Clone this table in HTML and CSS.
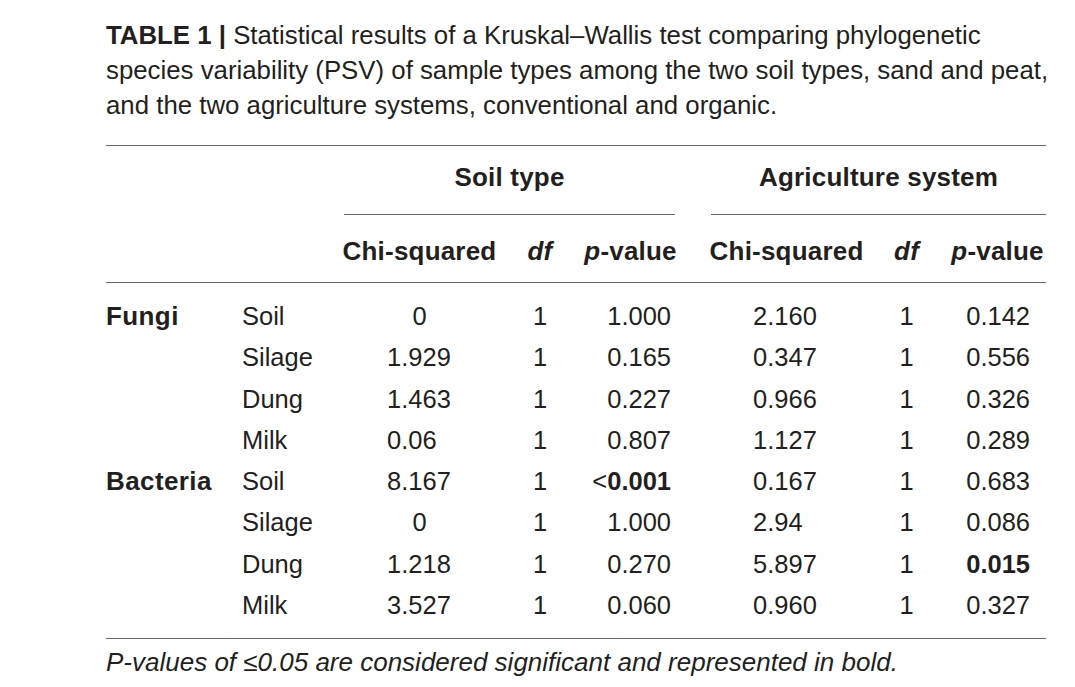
FILE: index.html
```html
<!DOCTYPE html>
<html lang="en">
<head>
<meta charset="utf-8">
<title>Table 1</title>
<link rel="stylesheet" href="styles.css">
</head>
<body>
<div class="page">
  <p class="caption"><b>TABLE 1 |</b> Statistical results of a Kruskal–Wallis test comparing phylogenetic<br>species variability (PSV) of sample types among the two soil types, sand and peat,<br>and the two agriculture systems, conventional and organic.</p>
  <table class="results">
    <colgroup>
      <col class="w-group"><col class="w-type"><col class="w-chi"><col class="w-df"><col class="w-p"><col class="w-gap"><col class="w-chi"><col class="w-df2"><col class="w-p2">
    </colgroup>
    <thead>
      <tr class="head1">
        <th></th><th></th>
        <th colspan="3" class="span"><div class="span-in soil">Soil type</div></th>
        <th></th>
        <th colspan="3" class="span"><div class="span-in agri">Agriculture system</div></th>
      </tr>
      <tr class="head2">
        <th></th><th></th>
        <th>Chi-squared</th><th><i>df</i></th><th><i>p</i>-value</th>
        <th></th>
        <th>Chi-squared</th><th><i>df</i></th><th><i>p</i>-value</th>
      </tr>
    </thead>
    <tbody>
      <tr class="first">
        <td class="grp">Fungi</td><td>Soil</td><td class="chi c">0</td><td class="df">1</td><td class="p">1.000</td><td></td><td class="chi2">2.160</td><td class="df">1</td><td class="p2">0.142</td>
      </tr>
      <tr>
        <td></td><td>Silage</td><td class="chi">1.929</td><td class="df">1</td><td class="p">0.165</td><td></td><td class="chi2">0.347</td><td class="df">1</td><td class="p2">0.556</td>
      </tr>
      <tr>
        <td></td><td>Dung</td><td class="chi">1.463</td><td class="df">1</td><td class="p">0.227</td><td></td><td class="chi2">0.966</td><td class="df">1</td><td class="p2">0.326</td>
      </tr>
      <tr>
        <td></td><td>Milk</td><td class="chi">0.06</td><td class="df">1</td><td class="p">0.807</td><td></td><td class="chi2">1.127</td><td class="df">1</td><td class="p2">0.289</td>
      </tr>
      <tr>
        <td class="grp">Bacteria</td><td>Soil</td><td class="chi">8.167</td><td class="df">1</td><td class="p">&lt;<b>0.001</b></td><td></td><td class="chi2">0.167</td><td class="df">1</td><td class="p2">0.683</td>
      </tr>
      <tr>
        <td></td><td>Silage</td><td class="chi c">0</td><td class="df">1</td><td class="p">1.000</td><td></td><td class="chi2">2.94</td><td class="df">1</td><td class="p2">0.086</td>
      </tr>
      <tr>
        <td></td><td>Dung</td><td class="chi">1.218</td><td class="df">1</td><td class="p">0.270</td><td></td><td class="chi2">5.897</td><td class="df">1</td><td class="p2"><b>0.015</b></td>
      </tr>
      <tr class="last">
        <td></td><td>Milk</td><td class="chi">3.527</td><td class="df">1</td><td class="p">0.060</td><td></td><td class="chi2">0.960</td><td class="df">1</td><td class="p2">0.327</td>
      </tr>
    </tbody>
  </table>
  <p class="note"><i>P-values of ≤0.05 are considered significant and represented in bold.</i></p>
</div>
</body>
</html>
```
FILE: styles.css
```css
html, body {
  margin: 0;
  padding: 0;
  background: #ffffff;
}

body {
  font-family: "Liberation Sans", Arial, sans-serif;
  color: #231f20;
}

.page {
  width: 940px;
  padding: 18px 0 0 106px;
}

.caption {
  margin: 0;
  font-size: 25.8px;
  line-height: 35px;
  white-space: nowrap;
}

.caption b {
  font-weight: bold;
}

.results {
  margin-top: 22px;
  width: 940px;
  table-layout: fixed;
  border-collapse: separate;
  border-spacing: 0;
  border-top: 1px solid #6a6a6a;
  border-bottom: 1px solid #6a6a6a;
}

.w-group { width: 136px; }
.w-type { width: 100px; }
.w-chi { width: 155px; }
.w-df { width: 86px; }
.w-p { width: 95px; }
.w-gap { width: 31px; }
.w-df2 { width: 85px; }
.w-p2 { width: 97px; }

.results th {
  padding: 0;
  font-size: 26px;
  font-weight: bold;
  letter-spacing: 0.2px;
  line-height: 32px;
  text-align: center;
  white-space: nowrap;
}

.head1 th {
  vertical-align: top;
}

.span-in {
  padding: 15px 0 21px;
  border-bottom: 1px solid #6a6a6a;
}

.span-in.soil {
  margin: 0 3px 0 2px;
}

.span-in.agri {
  margin: 0 0 0 2px;
}

.head2 th {
  padding: 20px 0 15px;
  border-bottom: 1px solid #6a6a6a;
}

.results td {
  padding: 0;
  font-size: 25.5px;
  line-height: 41.3px;
  white-space: nowrap;
  text-align: left;
}

.results tr.first td {
  padding-top: 13px;
}

.results tr.last td {
  padding-bottom: 12px;
}

.results td.grp {
  font-weight: bold;
  font-size: 26px;
  letter-spacing: 0.4px;
}

.results td.chi {
  padding-left: 45px;
}

.results td.chi.c {
  padding-left: 0;
  text-align: center;
}

.results td.df {
  text-align: center;
}

.results td.p {
  text-align: right;
  padding-right: 7px;
}

.results td.chi2 {
  padding-left: 44px;
}

.results td.p2 {
  text-align: right;
  padding-right: 16px;
}

.results td b {
  font-weight: bold;
}

.note {
  margin: 8px 0 0;
  font-size: 26px;
  line-height: 30px;
  white-space: nowrap;
}
```
